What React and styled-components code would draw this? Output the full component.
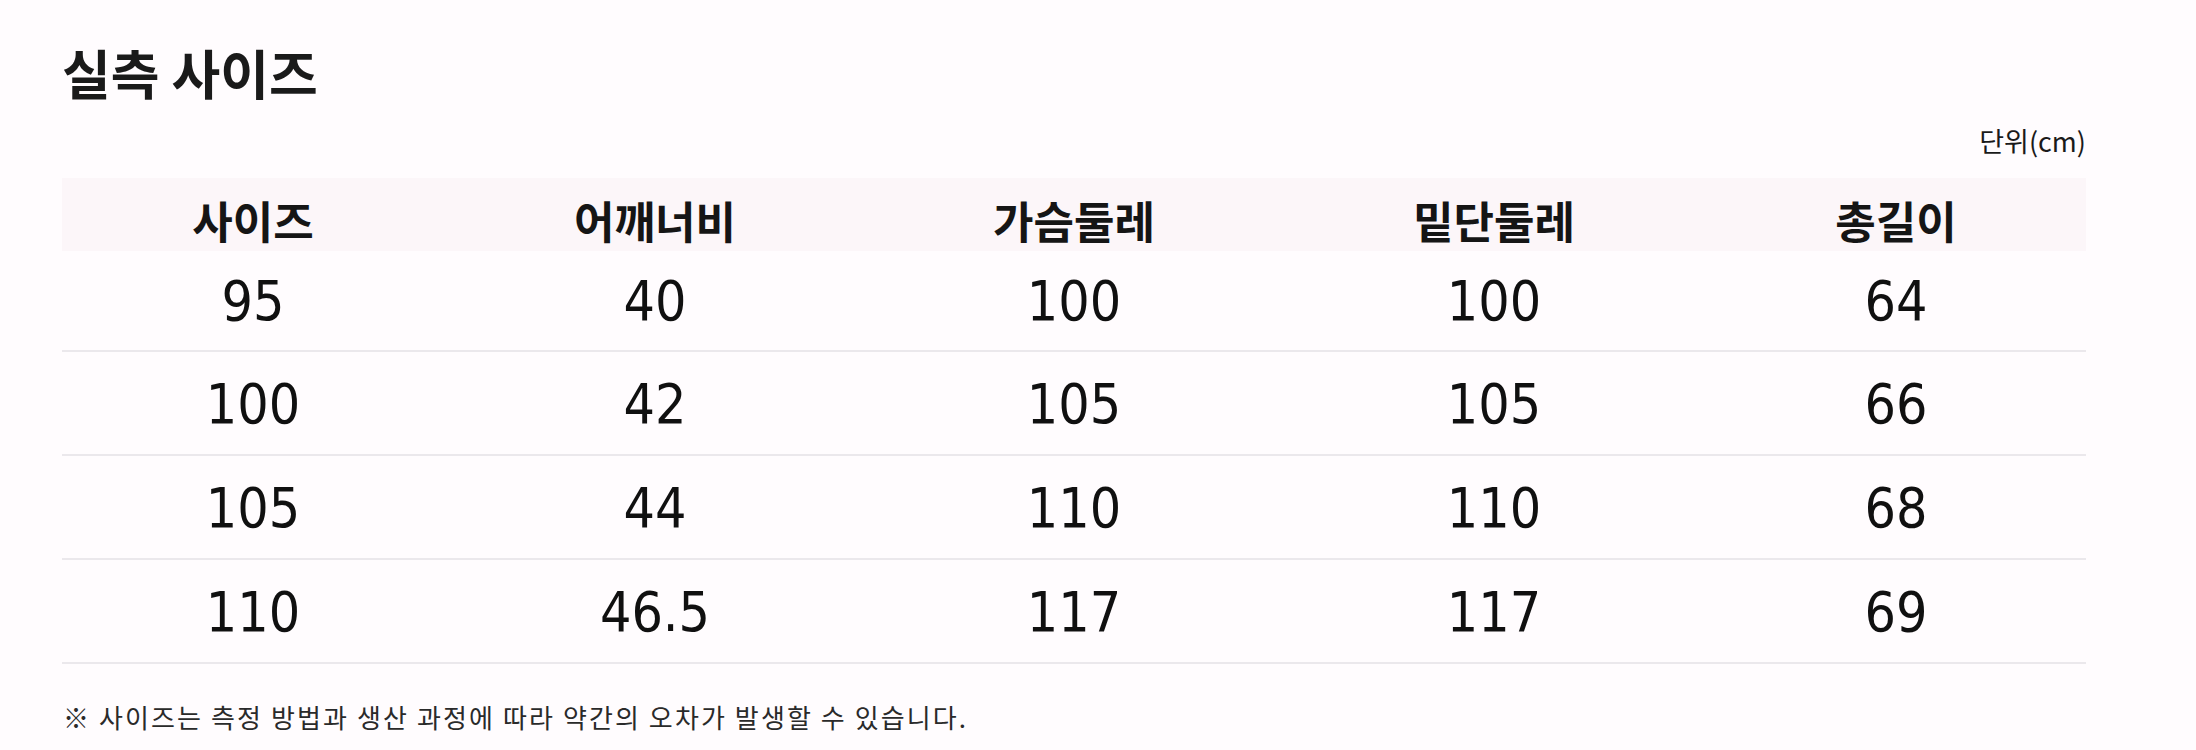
import React from "react";
import styled, { createGlobalStyle } from "styled-components";

const GlobalStyle = createGlobalStyle`
  body {
    margin: 0;
    background: #fffcfe;
    font-family: "Noto Sans CJK KR", "Noto Sans", sans-serif;
    color: #111;
  }
`;

const Page = styled.div`
  width: 2196px;
  height: 750px;
  box-sizing: border-box;
  padding: 40px 110px 0 62px;
  background: #fffcfe;
`;

const Title = styled.h1`
  margin: 0;
  font-size: 53px;
  font-weight: 700;
  line-height: 64px;
  color: #1a1a1a;
`;

const Unit = styled.div`
  margin-top: 19px;
  text-align: right;
  font-size: 27px;
  line-height: 36px;
  color: #1a1a1a;
`;

const Table = styled.div`
  margin-top: 19px;
  display: grid;
  grid-template-columns: 382fr 422fr 416fr 424fr 380fr;
`;

const HeadCell = styled.div`
  height: 73px;
  display: flex;
  align-items: center;
  justify-content: center;
  background: #fcf6f9;
  font-size: 44px;
  font-weight: 700;
  color: #151515;
  padding-top: 10px;
  box-sizing: border-box;
`;

const Cell = styled.div`
  height: ${(p) => (p.$first ? 101 : 104)}px;
  display: flex;
  align-items: center;
  justify-content: center;
  border-bottom: 2px solid #ebe8ec;
  font-family: "DejaVu Sans Condensed", "DejaVu Sans", sans-serif;
  font-size: 55px;
  color: #101010;
  padding-top: ${(p) => (p.$first ? 0 : 2)}px;
  box-sizing: border-box;
`;

const Note = styled.p`
  margin: 36px 0 0 1px;
  font-size: 26px;
  letter-spacing: 2.1px;
  line-height: 34px;
  color: #2a2a2a;
`;

const headers = ["사이즈", "어깨너비", "가슴둘레", "밑단둘레", "총길이"];
const rows = [
  ["95", "40", "100", "100", "64"],
  ["100", "42", "105", "105", "66"],
  ["105", "44", "110", "110", "68"],
  ["110", "46.5", "117", "117", "69"],
];

export default function App() {
  return (
    <Page>
      <GlobalStyle />
      <Title>실측 사이즈</Title>
      <Unit>단위(cm)</Unit>
      <Table>
        {headers.map((h) => (
          <HeadCell key={h}>{h}</HeadCell>
        ))}
        {rows.map((row, r) =>
          row.map((v, c) => (
            <Cell key={`${r}-${c}`} $first={r === 0}>
              {v}
            </Cell>
          ))
        )}
      </Table>
      <Note>※ 사이즈는 측정 방법과 생산 과정에 따라 약간의 오차가 발생할 수 있습니다.</Note>
    </Page>
  );
}
